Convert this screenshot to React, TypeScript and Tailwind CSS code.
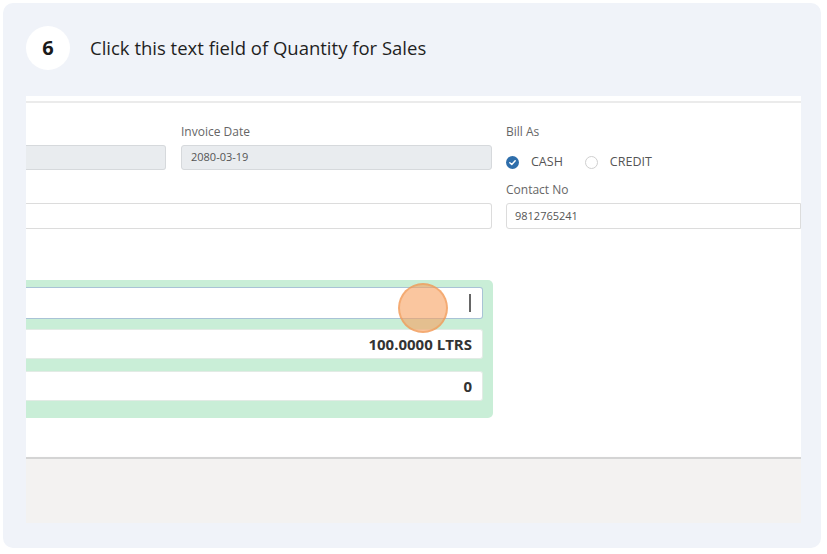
import React from "react";

const font = { fontFamily: '"Open Sans", "Noto Sans", Arial, sans-serif' };

export default function App() {
  return (
    <div className="w-[827px] h-[554px] bg-white overflow-hidden" style={font}>
      <div className="ml-[3px] mt-[3px] w-[818px] h-[545px] rounded-[10px] bg-[#f0f3f9] pl-[23px] pt-[23px]">
        {/* header */}
        <div className="flex items-center h-[44px]">
          <div className="w-[44px] h-[44px] rounded-full bg-white flex items-center justify-center text-[20px] font-bold text-[#1a1a1a]">
            6
          </div>
          <div className="ml-[20px] text-[18.5px] text-[#1f1f1f] leading-none">
            Click this text field of Quantity for Sales
          </div>
        </div>

        {/* screenshot */}
        <div className="relative mt-[26px] w-[775px] h-[427px] overflow-hidden bg-white flex flex-col">
          <div className="h-[5px] bg-white" />
          <div className="h-[2px] bg-[#ebebeb]" />
          <div className="flex flex-1">
            {/* left block */}
            <div className="w-[467px] flex flex-col">
              <div className="flex mt-[22px]">
                <div className="w-[140px] flex flex-col">
                  <div className="h-[14px]" />
                  <div className="mt-[6px] h-[25px] bg-[#e9ecef] border border-[#d6d9dc] border-l-0 rounded-r-[3px]" />
                </div>
                <div className="ml-[15px] w-[311px] flex flex-col">
                  <div className="h-[14px] text-[12px] leading-[14px] text-[#666]">Invoice Date</div>
                  <div className="mt-[6px] h-[25px] bg-[#e9ecef] border border-[#d6d9dc] rounded-[3px] flex items-center pl-[9px] text-[11px] text-[#555]">
                    2080-03-19
                  </div>
                </div>
              </div>
              <div className="mt-[33px] w-[466px] h-[26px] bg-white border border-[#dcdcdc] border-l-0 rounded-r-[3px]" />

              {/* green panel */}
              <div className="mt-[51px] w-[467px] bg-[#c9eed7] rounded-r-[5px] pt-[7px] pr-[10px] pb-[17px]">
                <div className="h-[32px] bg-white border border-[#a9c3d6] border-l-0 rounded-r-[3px] flex items-center justify-end pr-[11px]">
                  <span className="w-[2px] h-[18px] bg-[#666]" />
                </div>
                <div className="mt-[10px] h-[30px] bg-white border border-[#e2ebe5] border-l-0 rounded-r-[3px] flex items-center justify-end pr-[10px] text-[15px] font-bold text-[#333]">
                  100.0000 LTRS
                </div>
                <div className="mt-[12px] h-[30px] bg-white border border-[#e2ebe5] border-l-0 rounded-r-[3px] flex items-center justify-end pr-[10px] text-[15px] font-bold text-[#333]">
                  0
                </div>
              </div>
            </div>

            {/* right column */}
            <div className="ml-[13px] w-[320px] flex flex-col">
              <div className="mt-[22px] h-[14px] text-[12px] leading-[14px] text-[#666]">Bill As</div>
              <div className="mt-[17px] h-[12px] flex items-center text-[12.5px] text-[#555]">
                <span className="w-[13px] h-[13px] rounded-full bg-[#2e6eab] flex items-center justify-center">
                  <svg width="9" height="9" viewBox="0 0 10 10">
                    <path d="M2 5.2 L4.2 7.2 L8 3" stroke="white" strokeWidth="1.6" fill="none" strokeLinecap="round" strokeLinejoin="round" />
                  </svg>
                </span>
                <span className="ml-[12px]">CASH</span>
                <span className="ml-[22px] w-[13px] h-[13px] rounded-full bg-white border border-[#cfcfcf]" />
                <span className="ml-[12px]">CREDIT</span>
              </div>
              <div className="mt-[15px] h-[14px] text-[12px] leading-[14px] text-[#666]">Contact No</div>
              <div className="mt-[6px] h-[26px] bg-white border border-[#dcdcdc] rounded-l-[3px] flex items-center pl-[8px] text-[11px] text-[#555]">
                9812765241
              </div>
            </div>
          </div>

          {/* bottom */}
          <div className="h-[2px] bg-[#d4d4d4] shadow-[0_1px_2px_rgba(0,0,0,0.15)]" />
          <div className="h-[64px] bg-[#f3f2f1]" />

          {/* click marker */}
          <div className="absolute left-[372px] top-[187px] w-[50px] h-[50px] rounded-full bg-[rgba(247,160,95,0.6)] border-2 border-[rgba(238,150,80,0.55)]" />
        </div>
      </div>
    </div>
  );
}
